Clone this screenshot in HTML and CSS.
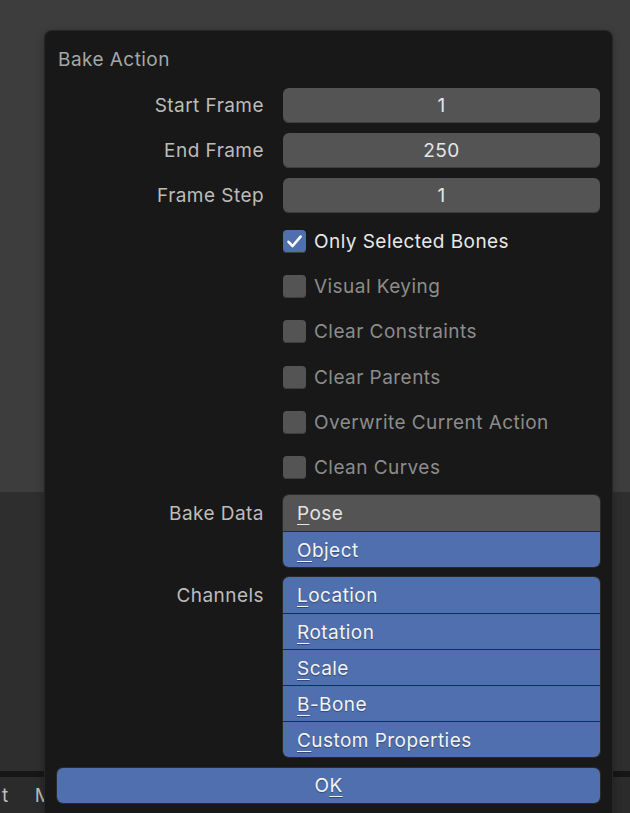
FILE: index.html
```html
<!DOCTYPE html>
<html>
<head>
<meta charset="utf-8">
<link rel="stylesheet" href="styles.css">
</head>
<body>
<div class="screen">
  <div class="area-top"></div>
  <div class="area-bottom"></div>
  <div class="status-divider"></div>
  <div class="statusbar"><span class="sb-a">t</span><span class="sb-b">Move</span></div>

  <div class="dialog">
    <div class="title">Bake Action</div>
    <div class="form">
      <div class="label">Start Frame</div><div class="field">1</div>
      <div class="label">End Frame</div><div class="field">250</div>
      <div class="label">Frame Step</div><div class="field">1</div>

      <div></div>
      <div class="check on">
        <span class="box"><svg viewBox="0 0 23 23" width="23" height="23"><path d="M5.5 11.8 L9.6 16 L17.6 6.6" fill="none" stroke="#ffffff" stroke-width="2.6" stroke-linecap="round" stroke-linejoin="round"/></svg></span>
        <span class="check-text">Only Selected Bones</span>
      </div>
      <div></div>
      <div class="check"><span class="box"></span><span class="check-text">Visual Keying</span></div>
      <div></div>
      <div class="check"><span class="box"></span><span class="check-text">Clear Constraints</span></div>
      <div></div>
      <div class="check"><span class="box"></span><span class="check-text">Clear Parents</span></div>
      <div></div>
      <div class="check"><span class="box"></span><span class="check-text">Overwrite Current Action</span></div>
      <div></div>
      <div class="check"><span class="box"></span><span class="check-text">Clean Curves</span></div>

      <div class="label enum-label">Bake Data</div>
      <div class="enum">
        <div class="item"><span class="u">P</span>ose</div>
        <div class="item sel"><span class="u">O</span>bject</div>
      </div>

      <div class="label enum-label">Channels</div>
      <div class="enum">
        <div class="item sel"><span class="u">L</span>ocation</div>
        <div class="item sel"><span class="u">R</span>otation</div>
        <div class="item sel"><span class="u">S</span>cale</div>
        <div class="item sel"><span class="u">B</span>-Bone</div>
        <div class="item sel"><span class="u">C</span>ustom Properties</div>
      </div>
    </div>
    <div class="ok">O<span class="u">K</span></div>
  </div>
</div>
</body>
</html>
```
FILE: styles.css
```css
* { box-sizing: border-box; }
html, body { margin: 0; padding: 0; }
body {
  width: 630px;
  height: 813px;
  overflow: hidden;
  font-family: "Inter", "DejaVu Sans", sans-serif;
  font-size: 19px;
  letter-spacing: 0.45px;
  background: #2b2b2b;
}
.screen {
  position: relative;
  width: 630px;
  height: 813px;
  overflow: hidden;
}
.area-top { height: 492px; background: #3d3d3d; }
.area-bottom { height: 279px; background: #2e2e2e; }
.status-divider { height: 6px; background: #161616; }
.statusbar {
  height: 36px;
  background: #2b2b2b;
  color: #bdbdbd;
  display: flex;
  align-items: center;
  padding-left: 2px;
  gap: 26px;
  line-height: 1;
}

.dialog {
  position: absolute;
  left: 45px;
  top: 31px;
  width: 567px;
  height: 800px;
  background: #181818;
  border-radius: 7px;
  box-shadow: 0 0 0 1px #262626, 0 2px 8px rgba(0,0,0,0.35);
  padding: 17px 12px 0 12px;
}
.title {
  color: #a6a6a6;
  line-height: 24px;
  height: 24px;
  padding-left: 1px;
  margin-bottom: 16px;
}
.form {
  display: grid;
  grid-template-columns: 207px 317px;
  column-gap: 19px;
  row-gap: 10px;
}
.label {
  color: #bcbcbc;
  text-align: right;
  line-height: 35px;
  height: 35px;
}
.field {
  height: 35px;
  line-height: 35px;
  background: #545454;
  border-radius: 6px;
  box-shadow: inset 0 -1px 0 #3e3e3e;
  color: #e6e6e6;
  text-align: center;
}
.check {
  height: 35.3px;
  padding-top: 1px;
  display: flex;
  align-items: center;
  gap: 8px;
}
.box {
  width: 23px;
  height: 23px;
  border-radius: 4px;
  background: #545454;
  box-shadow: inset 0 -1px 0 #3e3e3e;
  display: flex;
}
.check.on .box { background: #4f6fae; }
.check-text { color: #8c8c8c; }
.check.on .check-text { color: #e8e8e8; }

.enum-label { line-height: 38px; height: 36px; align-self: start; }
.enum {
  border-radius: 6px;
  overflow: hidden;
  box-shadow: 0 0 0 1px #2a2a2a;
  background: #2a2a2a;
  display: flex;
  flex-direction: column;
  gap: 1px;
}
.item {
  height: 35px;
  line-height: 37px;
  padding-left: 14px;
  background: #545454;
  color: #e4e4e4;
  overflow: hidden;
}
.item:first-child { height: 36px; line-height: 38px; }
.item.sel {
  background: #4f6fae;
  color: #f4f4f4;
  text-shadow: 0 1px 1px rgba(0,0,0,0.35);
}
.u {
  text-decoration: underline;
  text-decoration-thickness: 1px;
  text-underline-offset: 4px;
}
.ok {
  margin-top: 11px;
  height: 35px;
  line-height: 35px;
  background: #4f6fae;
  border-radius: 6px;
  box-shadow: 0 0 0 1px #2a2a2a;
  color: #f4f4f4;
  text-align: center;
  text-shadow: 0 1px 1px rgba(0,0,0,0.35);
}
```
